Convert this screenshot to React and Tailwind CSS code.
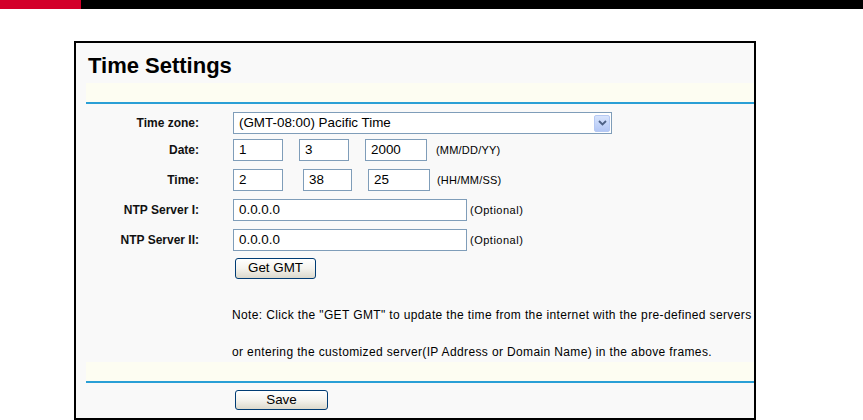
import React from 'react';

const font = { fontFamily: '"Liberation Sans", Arial, sans-serif' };

function Field({ value, className }) {
  return (
    <div className={`h-[22px] bg-white border border-[#7f9db9] pl-[5px] flex items-center text-[13.4px] text-black ${className}`}>
      {value}
    </div>
  );
}

function Label({ children }) {
  return (
    <div className="w-[113px] text-right text-[12px] font-bold text-[#111] whitespace-nowrap">
      {children}
    </div>
  );
}

function XpButton({ children, className }) {
  return (
    <div
      className={`flex items-center justify-center rounded-[3px] border border-[#003c74] bg-gradient-to-b from-white via-[#f4f3ee] to-[#dcd9cc] text-[13.4px] text-black ${className}`}
    >
      {children}
    </div>
  );
}

export default function App() {
  return (
    <div className="w-[863px] h-[420px] bg-white overflow-hidden" style={font}>
      {/* top bar */}
      <div className="flex h-[9px]">
        <div className="w-[81px] bg-[#d3002a]" />
        <div className="flex-1 bg-black" />
      </div>

      {/* settings box */}
      <div className="ml-[74px] mt-[32px] w-[682px] h-[379px] border-2 border-black bg-[#f9f9f9]">
        <div className="pl-[10px]">
          <div className="h-[40px] pt-[10px] pl-[2px] text-[22px] leading-[26px] font-bold text-black">
            Time Settings
          </div>
          <div className="h-[19px] bg-[#fdfdf2]" />
          <div className="h-[2px] bg-[#2a9fd6]" />

          <div className="pt-[8px]">
            {/* time zone */}
            <div className="flex items-center h-[22px]">
              <Label>Time zone:</Label>
              <div className="ml-[34px] w-[379px] h-[22px] bg-white border border-[#7f9db9] flex items-center justify-between pl-[5px] pr-[1px]">
                <span className="text-[13.4px] text-black whitespace-nowrap">(GMT-08:00) Pacific Time</span>
                <div className="w-[16px] h-[17px] rounded-[2px] border border-[#b6c9f3] bg-gradient-to-b from-[#d8e4fd] to-[#b3c7f5] flex items-center justify-center">
                  <svg width="9" height="6" viewBox="0 0 9 6">
                    <path d="M1 1 L4.5 4.5 L8 1" fill="none" stroke="#4d6185" strokeWidth="1.8" />
                  </svg>
                </div>
              </div>
            </div>

            {/* date */}
            <div className="flex items-center h-[22px] mt-[5px]">
              <Label>Date:</Label>
              <Field value="1" className="ml-[34px] w-[50px]" />
              <Field value="3" className="ml-[16px] w-[50px]" />
              <Field value="2000" className="ml-[16px] w-[62px]" />
              <span className="ml-[9px] text-[11px] tracking-[0.2px] text-black">(MM/DD/YY)</span>
            </div>

            {/* time */}
            <div className="flex items-center h-[22px] mt-[8px]">
              <Label>Time:</Label>
              <Field value="2" className="ml-[34px] w-[50px]" />
              <Field value="38" className="ml-[20px] w-[49px]" />
              <Field value="25" className="ml-[16px] w-[62px]" />
              <span className="ml-[7px] text-[11px] tracking-[0.2px] text-black">(HH/MM/SS)</span>
            </div>

            {/* ntp 1 */}
            <div className="flex items-center h-[22px] mt-[8px]">
              <Label>NTP Server I:</Label>
              <Field value="0.0.0.0" className="ml-[34px] w-[234px]" />
              <span className="ml-[3px] text-[11px] tracking-[0.5px] text-black">(Optional)</span>
            </div>

            {/* ntp 2 */}
            <div className="flex items-center h-[22px] mt-[8px]">
              <Label>NTP Server II:</Label>
              <Field value="0.0.0.0" className="ml-[34px] w-[234px]" />
              <span className="ml-[3px] text-[11px] tracking-[0.5px] text-black">(Optional)</span>
            </div>

            <div className="flex mt-[7px]">
              <div className="w-[113px]" />
              <XpButton className="ml-[36px] w-[81px] h-[21px]">Get GMT</XpButton>
            </div>

            {/* note */}
            <div className="ml-[146px] mt-[29px] text-[12px] tracking-[0.37px] leading-[14px] text-black whitespace-nowrap">
              <p>Note: Click the "GET GMT" to update the time from the internet with the pre-defined servers</p>
              <p className="mt-[23px]">or entering the customized server(IP Address or Domain Name) in the above frames.</p>
            </div>
          </div>

          <div className="mt-[3px] h-[19px] bg-[#fdfdf2]" />
          <div className="h-[2px] bg-[#2a9fd6]" />

          <div className="flex mt-[7px]">
            <div className="w-[113px]" />
            <XpButton className="ml-[36px] w-[93px] h-[20px]">Save</XpButton>
          </div>
        </div>
      </div>
    </div>
  );
}
